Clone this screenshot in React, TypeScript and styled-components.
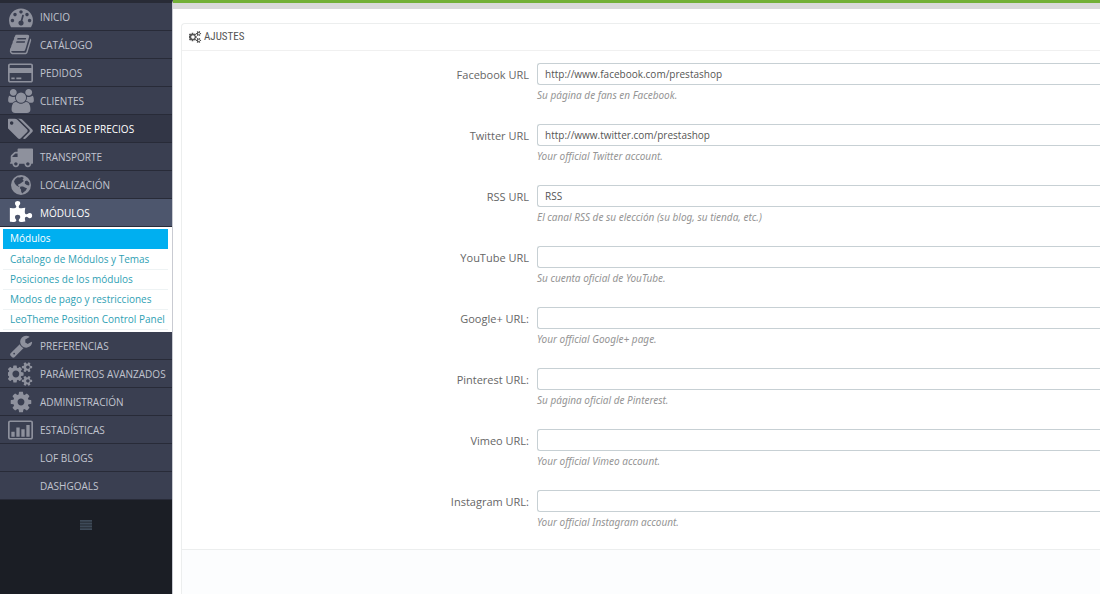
import React from "react";
import styled, { createGlobalStyle, css } from "styled-components";

const Global = createGlobalStyle`
  * { box-sizing: border-box; }
  html, body { margin: 0; }
  body {
    background: #fff;
    font-family: "Open Sans", "Noto Sans", sans-serif;
    overflow-x: hidden;
  }
`;

type Glyph = { box: string; w: number; h: number; d: string };

const icons: Record<string, Glyph> = {
  dashboard: { box: "0 0 1792 1792", w: 24, h: 24, d: "M384 1152q0-53-37.5-90.5t-90.5-37.5-90.5 37.5-37.5 90.5 37.5 90.5 90.5 37.5 90.5-37.5 37.5-90.5zm192-448q0-53-37.5-90.5t-90.5-37.5-90.5 37.5-37.5 90.5 37.5 90.5 90.5 37.5 90.5-37.5 37.5-90.5zm428 481l101-382q6-26-7.5-48.5t-38.5-29.5-48 6.5-30 39.5l-101 382q-60 5-107 43.5t-63 98.5q-20 77 20 146t117 89 146-20 89-117q16-60-6-117t-72-91zm660-33q0-53-37.5-90.5t-90.5-37.5-90.5 37.5-37.5 90.5 37.5 90.5 90.5 37.5 90.5-37.5 37.5-90.5zm-640-640q0-53-37.5-90.5t-90.5-37.5-90.5 37.5-37.5 90.5 37.5 90.5 90.5 37.5 90.5-37.5 37.5-90.5zm448 192q0-53-37.5-90.5t-90.5-37.5-90.5 37.5-37.5 90.5 37.5 90.5 90.5 37.5 90.5-37.5 37.5-90.5zm320 448q0 261-141 483-19 29-54 29h-1402q-35 0-54-29-141-221-141-483 0-182 71-348t191-286 286-191 348-71 348 71 286 191 191 286 71 348z" },
  book: { box: "0 0 1792 1792", w: 23, h: 23, d: "M1703 478q40 57 18 129l-275 906q-19 64-76.5 107.5t-122.5 43.5h-923q-77 0-148.5-53.5t-99.5-131.5q-24-67-2-127 0-4 3-27t4-37q1-8-3-21.5t-3-19.5q2-11 8-21t16.5-23.5 16.5-23.5q23-38 45-91.5t30-91.5q3-10 .5-30t-.5-28q3-11 17-28t17-23q21-36 42-92t25-90q1-9-2.5-32t.5-28q4-13 22-30.5t22-22.5q19-26 42.5-84.5t27.5-96.5q1-8-3-25.5t-2-26.5q2-8 9-18t18-23 17-21q8-12 16.5-30.5t15-35 16-36 19.5-32 26.5-23.5 36-11.5 47.5 5.5l-1 3q38-9 51-9h761q74 0 114 56t18 130l-274 906q-36 119-71.5 153.5t-128.5 34.5h-869q-27 0-38 15-11 16-1 43 24 70 144 70h923q29 0 56-15.5t35-41.5l300-987q7-22 5-57 38 15 59 43zm-1064 2q-4 13 2 22.5t20 9.5h608q13 0 25.5-9.5t16.5-22.5l21-64q4-13-2-22.5t-20-9.5h-608q-13 0-25.5 9.5t-16.5 22.5zm-83 256q-4 13 2 22.5t20 9.5h608q13 0 25.5-9.5t16.5-22.5l21-64q4-13-2-22.5t-20-9.5h-608q-13 0-25.5 9.5t-16.5 22.5z" },
  card: { box: "0 0 1920 1792", w: 25, h: 24, d: "M160 160h1600q66 0 113 47t47 113v1152q0 66-47 113t-113 47H160q-66 0-113-47T0 1472V320q0-66 47-113t113-47zm0 128q-32 0-32 32v192h1664V320q0-32-32-32zM128 896v576q0 32 32 32h1600q32 0 32-32V896zm128 352h256v128H256zm384 0h384v128H640z" },
  users: { box: "0 0 1920 1792", w: 26, h: 24, d: "M593 896q-162 5-265 128h-134q-82 0-138-40.5t-56-118.5q0-353 124-353 6 0 43.5 21t97.5 42.5 119 21.5q67 0 133-23-5 37-5 66 0 139 81 256zm1071 637q0 120-73 189.5t-194 69.5h-874q-121 0-194-69.5t-73-189.5q0-53 3.5-103.5t14-109 26.5-108.5 43-97.5 62-81 85.5-53.5 111.5-20q10 0 43 21.5t73 48 107 48 135 21.5 135-21.5 107-48 73-48 43-21.5q61 0 111.5 20t85.5 53.5 62 81 43 97.5 26.5 108.5 14 109 3.5 103.5zm-1024-1277q0 106-75 181t-181 75-181-75-75-181 75-181 181-75 181 75 75 181zm704 384q0 159-112.5 271.5t-271.5 112.5-271.5-112.5-112.5-271.5 112.5-271.5 271.5-112.5 271.5 112.5 112.5 271.5zm576 225q0 78-56 118.5t-138 40.5h-134q-103-123-265-128 81-117 81-256 0-29-5-66 66 23 133 23 59 0 119-21.5t97.5-42.5 43.5-21q124 0 124 353zm-128-609q0 106-75 181t-181 75-181-75-75-181 75-181 181-75 181 75 75 181z" },
  tags: { box: "0 0 1835 1792", w: 25, h: 24, d: "M384 448q0-53-37.5-90.5t-90.5-37.5-90.5 37.5-37.5 90.5 37.5 90.5 90.5 37.5 90.5-37.5 37.5-90.5zm1067 576q0 53-37 90l-491 492q-39 37-91 37-53 0-90-37l-715-716q-38-37-64.5-101t-26.5-117v-416q0-52 38-90t90-38h416q53 0 117 26.5t102 64.5l715 714q37 39 37 91zm384 0q0 53-37 90l-491 492q-39 37-91 37-36 0-59-14t-53-45l470-470q37-37 37-90 0-52-37-91l-715-714q-38-38-102-64.5t-117-26.5h224q53 0 117 26.5t102 64.5l715 714q37 39 37 91z" },
  truck: { box: "0 0 1792 1792", w: 24, h: 24, d: "M640 1408q0-52-38-90t-90-38-90 38-38 90 38 90 90 38 90-38 38-90zm-384-512h384v-256h-158q-13 0-22 9l-195 195q-9 9-9 22v30zm1280 512q0-52-38-90t-90-38-90 38-38 90 38 90 90 38 90-38 38-90zm256-1088v1024q0 15-4 26.5t-13.5 18.5-16.5 11.5-23.5 6-22.5 2-25.5 0-22.5-.5q0 106-75 181t-181 75-181-75-75-181h-384q0 106-75 181t-181 75-181-75-75-181h-64q-3 0-22.5.5t-25.5 0-22.5-2-23.5-6-16.5-11.5-13.5-18.5-4-26.5q0-26 19-45t45-19v-320q0-8-.5-35t0-38 2.5-34.5 6.5-37 14-30.5 22.5-30l198-198q19-19 50.5-32t58.5-13h160v-192q0-26 19-45t45-19h1024q26 0 45 19t19 45z" },
  globe: { box: "0 0 24 24", w: 24, h: 24, d: "M12 2a10 10 0 1 1 0 20a10 10 0 0 1 0-20zM8.600 4.200L11 4.600L13 3.800L14.800 5L13.600 6.600L14.800 8L12.800 9.600L11 10.800L9.400 11.200L9 12.600L10.600 13.400L9.600 13.800L7.400 12.600L5.800 10.600L5 8.200L6.400 6zM16 8.200L18 7.400L20.200 9.400L20.400 12L19.400 12.600L17.400 11.800L15.800 10.400zM11.600 13.600L14 13.400L16.400 14.800L18 15.200L16.800 17.600L14.600 19.200L13.200 20.600L12.200 18.800L12 16.600L10.800 15z" },
  puzzle: { box: "0 0 1792 1792", w: 24, h: 24, d: "M1728 1098q0 81-44.5 135t-123.5 54q-41 0-77.5-17.5t-59-38-56.5-38-71-17.5q-110 0-110 124 0 39 16 115t15 115v5q-22 0-33 1-34 3-97.5 11.5t-115.5 13.5-98 5q-61 0-103-26.5t-42-83.5q0-37 17.5-71t38-56.5 38-59 17.5-77.5q0-79-54-123.5t-135-44.5q-84 0-143 45.5t-59 127.5q0 43 15 83t33.5 64.5 33.5 53 15 50.5q0 45-46 89-37 35-117 35-95 0-245-24-9-2-27.5-4t-27.5-4l-13-2q-1 0-3-1-2 0-2-1v-1024q2 1 17.5 3.5t34 5 21.5 3.5q150 24 245 24 80 0 117-35 46-44 46-89 0-22-15-50.5t-33.5-53-33.5-64.5-15-83q0-82 59-127.5t144-45.5q80 0 134 44.5t54 123.5q0 41-17.5 77.5t-38 59-38 56.5-17.5 71q0 57 42 83.5t103 26.5q64 0 180-15t163-17v2q-1 2-3.500 17.500t-5 34-3.500 21.500q-24 150-24 245 0 80 35 117 44 46 89 46 22 0 50.500-15t53-33.500 64.500-33.500 83-15q82 0 127.500 59t45.500 143z" },
  wrench: { box: "0 0 1792 1792", w: 24, h: 24, d: "M448 1472q0-26-19-45t-45-19-45 19-19 45 19 45 45 19 45-19 19-45zm644-420l-682 682q-37 37-90 37-52 0-91-37l-106-108q-38-36-38-90 0-53 38-91l681-681q39 98 114.5 173.5t173.5 114.5zm634-435q0 39-23 106-47 134-164.5 217.5t-258.5 83.5q-185 0-316.5-131.5t-131.5-316.5 131.5-316.5 316.5-131.5q58 0 121.5 16.5t107.5 46.5q16 11 16 28t-16 28l-293 169v224l193 107q5-3 79-48.5t135.5-81 70.5-35.5q15 0 23.5 10t8.5 25z" },
  cogs: { box: "0 0 1920 1792", w: 26, h: 24, d: "M832 896q0-106-75-181t-181-75-181 75-75 181 75 181 181 75 181-75 75-181zm768 512q0-52-38-90t-90-38-90 38-38 90q0 53 37.5 90.5t90.5 37.5 90.5-37.5 37.5-90.5zm0-1024q0-52-38-90t-90-38-90 38-38 90q0 53 37.5 90.5t90.5 37.5 90.5-37.5 37.5-90.5zm-448 421v185q0 10-7 19.5t-16 10.5l-155 24q-11 35-32 76 34 48 90 115 7 11 7 20 0 12-7 19-23 30-82.5 89.5t-78.5 59.5q-11 0-21-7l-115-90q-37 19-77 31-11 108-23 155-7 24-30 24h-186q-11 0-20-7.5t-10-17.5l-23-153q-34-10-75-31l-118 89q-7 7-20 7-11 0-21-8-144-133-144-160 0-9 7-19 10-14 41-53t47-61q-23-44-35-82l-152-24q-10-1-17-9.5t-7-19.5v-185q0-10 7-19.5t16-10.5l155-24q11-35 32-76-34-48-90-115-7-11-7-20 0-12 7-20 22-30 82-89t79-59q11 0 21 7l115 90q34-18 77-32 11-108 23-154 7-24 30-24h186q11 0 20 7.5t10 17.5l23 153q34 10 75 31l118-89q8-7 20-7 11 0 21 8 144 133 144 160 0 8-7 19-12 16-42 54t-45 60q23 48 34 82l152 23q10 2 17 10.5t7 19.5zm640 533v140q0 16-149 31-12 27-30 52 51 113 51 138 0 4-4 7-122 71-124 71-8 0-46-47t-52-68q-20 2-30 2t-30-2q-14 21-52 68t-46 47q-2 0-124-71-4-3-4-7 0-25 51-138-18-25-30-52-149-15-149-31v-140q0-16 149-31 13-29 30-52-51-113-51-138 0-4 4-7 4-2 35-20t59-34 30-16q8 0 46 46.5t52 67.5q20-2 30-2t30 2q51-71 92-112l6-2q4 0 124 70 4 3 4 7 0 25-51 138 17 23 30 52 149 15 149 31zm0-1024v140q0 16-149 31-12 27-30 52 51 113 51 138 0 4-4 7-122 71-124 71-8 0-46-47t-52-68q-20 2-30 2t-30-2q-14 21-52 68t-46 47q-2 0-124-71-4-3-4-7 0-25 51-138-18-25-30-52-149-15-149-31v-140q0-16 149-31 13-29 30-52-51-113-51-138 0-4 4-7 4-2 35-20t59-34 30-16q8 0 46 46.5t52 67.5q20-2 30-2t30 2q51-71 92-112l6-2q4 0 124 70 4 3 4 7 0 25-51 138 17 23 30 52 149 15 149 31z" },
  cog: { box: "0 0 1792 1792", w: 24, h: 24, d: "M1152 896q0-106-75-181t-181-75-181 75-75 181 75 181 181 75 181-75 75-181zm512-109v222q0 12-8 23t-20 13l-185 28q-19 54-39 91 35 50 107 138 10 12 10 25t-9 23q-27 37-99 108t-94 71q-12 0-26-9l-138-108q-44 23-91 38-16 136-29 186-7 28-36 28h-222q-14 0-24.5-8.5t-11.5-21.5l-28-184q-49-16-90-37l-141 107q-10 9-25 9-14 0-25-11-126-114-165-168-7-10-7-23 0-12 8-23 15-21 51-66.5t54-70.5q-27-50-41-99l-183-27q-13-2-21-12.5t-8-23.5v-222q0-12 8-23t19-13l186-28q14-46 39-92-40-57-107-138-10-12-10-24 0-10 9-23 26-36 98.5-107.5t94.5-71.5q13 0 26 10l138 107q44-23 91-38 16-136 29-186 7-28 36-28h222q14 0 24.5 8.5t11.5 21.5l28 184q49 16 90 37l142-107q9-9 24-9 13 0 25 10 129 119 165 170 7 8 7 22 0 12-8 23-15 21-51 66.5t-54 70.5q26 50 41 98l183 28q13 2 21 12.5t8 23.5z" },
  chart: { box: "0 0 1920 1792", w: 25, h: 24, d: "M160 160h1600q66 0 113 47t47 113v1152q0 66-47 113t-113 47H160q-66 0-113-47T0 1472V320q0-66 47-113t113-47zm0 128q-32 0-32 32v1152q0 32 32 32h1600q32 0 32-32V320q0-32-32-32zM256 1024h256v384H256zM640 704h256v704H640zM1024 832h256v576h-256zM1408 512h256v896h-256z" },
};

const Glyphs = ({ name, w, h }: { name: string; w?: number; h?: number }) => {
  const g = icons[name];
  return (
    <svg viewBox={g.box} width={w ?? g.w} height={h ?? g.h} fill="currentColor" fillRule={["card", "chart", "globe"].includes(name) ? "evenodd" : "nonzero"} aria-hidden="true">
      <path d={g.d} />
    </svg>
  );
};

const Page = styled.div`
  display: flex;
  min-height: 100vh;
`;
const Sidebar = styled.nav`
  flex: 0 0 173px;
  min-width: 0;
  background: #1b1e25;
  border-top: 3px solid #282b36;
  border-right: 1px solid #c9cbd2;
`;
const List = styled.ul`
  list-style: none;
  margin: 0;
  padding: 0;
`;
const MenuLink = styled.a<{ $state?: "hover" | "active" }>`
  display: flex;
  align-items: center;
  height: 28px;
  border-bottom: 1px solid #282b38;
  background: #3a3f51;
  color: #c1c4cf;
  font-size: 10px;
  line-height: 14px;
  text-decoration: none;
  white-space: nowrap;
  ${(p) => p.$state === "hover" && css`background: #323646; color: #fff;`}
  ${(p) => p.$state === "active" && css`background: #4d566d; color: #fff;`}
`;
const IconCell = styled.span<{ $lit?: boolean }>`
  flex: 0 0 40px;
  display: flex;
  justify-content: center;
  padding-left: 1px;
  color: ${(p) => (p.$lit ? "#fff" : "#8e919d")};
`;
const SubList = styled.ul`
  list-style: none;
  margin: 0;
  padding: 2px 4px 2px 3px;
  background: #fff;
`;
const SubLink = styled.a<{ $active?: boolean }>`
  display: block;
  padding: 0 7px;
  height: 20px;
  line-height: 19px;
  font-size: 10px;
  white-space: nowrap;
  text-decoration: none;
  ${(p) =>
    p.$active
      ? css`margin-bottom: 1px; background: #00aff0; color: #fff;`
      : css`border-bottom: 1px solid #eef3f4; color: #2f9fb4;`}
`;
const Collapse = styled.button`
  display: block;
  margin: 20px auto 0;
  padding: 0;
  border: 0;
  background: none;
  color: #3e4a58;
  svg { display: block; }
`;
const Main = styled.main`
  flex: 1;
  min-width: 0;
  display: flex;
  flex-direction: column;
  border-top: 3px solid #72b036;
`;
const Strip = styled.div`
  height: 6px;
  background: #d9d9d9;
`;
const Panel = styled.section`
  flex: 1;
  display: flex;
  flex-direction: column;
  margin: 14px 0 0 8px;
  border: 1px solid #eceeee;
  border-right: 0;
  border-bottom: 0;
  border-radius: 4px 0 0 0;
`;
const Title = styled.h1`
  display: flex;
  align-items: center;
  gap: 2px;
  margin: 0;
  padding: 0 7px;
  height: 27px;
  border-bottom: 1px solid #f0f0f0;
  color: #555;
  font: 400 11px/16px "Ubuntu Condensed", "Roboto Condensed", "Open Sans Condensed", Lato, sans-serif;
`;
const Form = styled.form`
  display: flex;
  flex-direction: column;
  gap: 21px;
  padding: 12px 0 19px;
`;
const Field = styled.div`
  display: grid;
  grid-template-columns: 347px 1fr;
  column-gap: 8px;
  row-gap: 2px;
`;
const Label = styled.label`
  text-align: right;
  color: #666;
  font-size: 11px;
  line-height: 24px;
  height: 22px;
`;
const Input = styled.input`
  width: 100%;
  height: 22px;
  padding: 0 7px;
  border: 1px solid #c7d0d4;
  border-right: 0;
  border-radius: 3px 0 0 3px;
  background: #fff;
  color: #555;
  font: 10px "Open Sans", sans-serif;
`;
const Help = styled.p`
  grid-column: 2;
  margin: 0;
  color: #959595;
  font-family: "Noto Sans", "Open Sans", sans-serif;
  font-size: 10px;
  font-style: italic;
  line-height: 16px;
`;
const Footer = styled.footer`
  flex: 1;
  min-height: 44px;
  border-top: 1px solid #eceeee;
  background: #fcfdfe;
`;

const menu: { text: string; icon?: string; state?: "hover" | "active"; sub?: string[] }[] = [
  { text: "INICIO", icon: "dashboard" },
  { text: "CATÁLOGO", icon: "book" },
  { text: "PEDIDOS", icon: "card" },
  { text: "CLIENTES", icon: "users" },
  { text: "REGLAS DE PRECIOS", icon: "tags", state: "hover" },
  { text: "TRANSPORTE", icon: "truck" },
  { text: "LOCALIZACIÓN", icon: "globe" },
  {
    text: "MÓDULOS",
    icon: "puzzle",
    state: "active",
    sub: ["Módulos", "Catalogo de Módulos y Temas", "Posiciones de los módulos", "Modos de pago y restricciones", "LeoTheme Position Control Panel"],
  },
  { text: "PREFERENCIAS", icon: "wrench" },
  { text: "PARÁMETROS AVANZADOS", icon: "cogs" },
  { text: "ADMINISTRACIÓN", icon: "cog" },
  { text: "ESTADÍSTICAS", icon: "chart" },
  { text: "LOF BLOGS" },
  { text: "DASHGOALS" },
];

const fields = [
  { id: "facebook", label: "Facebook URL", value: "http://www.facebook.com/prestashop", help: "Su página de fans en Facebook." },
  { id: "twitter", label: "Twitter URL", value: "http://www.twitter.com/prestashop", help: "Your official Twitter account." },
  { id: "rss", label: "RSS URL", value: "RSS", help: "El canal RSS de su elección (su blog, su tienda, etc.)" },
  { id: "youtube", label: "YouTube URL", value: "", help: "Su cuenta oficial de YouTube." },
  { id: "google", label: "Google+ URL:", value: "", help: "Your official Google+ page." },
  { id: "pinterest", label: "Pinterest URL:", value: "", help: "Su página oficial de Pinterest." },
  { id: "vimeo", label: "Vimeo URL:", value: "", help: "Your official Vimeo account." },
  { id: "instagram", label: "Instagram URL:", value: "", help: "Your official Instagram account." },
];

export default function App() {
  return (
    <Page>
      <Global />
      <Sidebar>
        <List>
          {menu.map((m) => (
            <li key={m.text}>
              <MenuLink href="#" $state={m.state}>
                <IconCell $lit={m.state === "active"}>{m.icon && <Glyphs name={m.icon} />}</IconCell>
                {m.text}
              </MenuLink>
              {m.sub && (
                <SubList>
                  {m.sub.map((s, i) => (
                    <li key={s}>
                      <SubLink href="#" $active={i === 0}>{s}</SubLink>
                    </li>
                  ))}
                </SubList>
              )}
            </li>
          ))}
        </List>
        <Collapse type="button" aria-label="Contraer menú">
          <svg width="12" height="10" viewBox="0 0 12 10" fill="currentColor" aria-hidden="true">
            <path opacity=".5" d="M0 0h12v10H0z" />
            <path d="M0 0h12v1.500H0zM0 3h12v1.300H0zM0 5.700h12v1.300H0zM0 8.500h12v1.500H0z" />
          </svg>
        </Collapse>
      </Sidebar>
      <Main>
        <Strip />
        <Panel>
          <Title>
            <Glyphs name="cogs" w={13} h={12} />
            AJUSTES
          </Title>
          <Form>
            {fields.map((f) => (
              <Field key={f.id}>
                <Label htmlFor={f.id}>{f.label}</Label>
                <Input id={f.id} type="text" defaultValue={f.value} />
                <Help>{f.help}</Help>
              </Field>
            ))}
          </Form>
          <Footer />
        </Panel>
      </Main>
    </Page>
  );
}
